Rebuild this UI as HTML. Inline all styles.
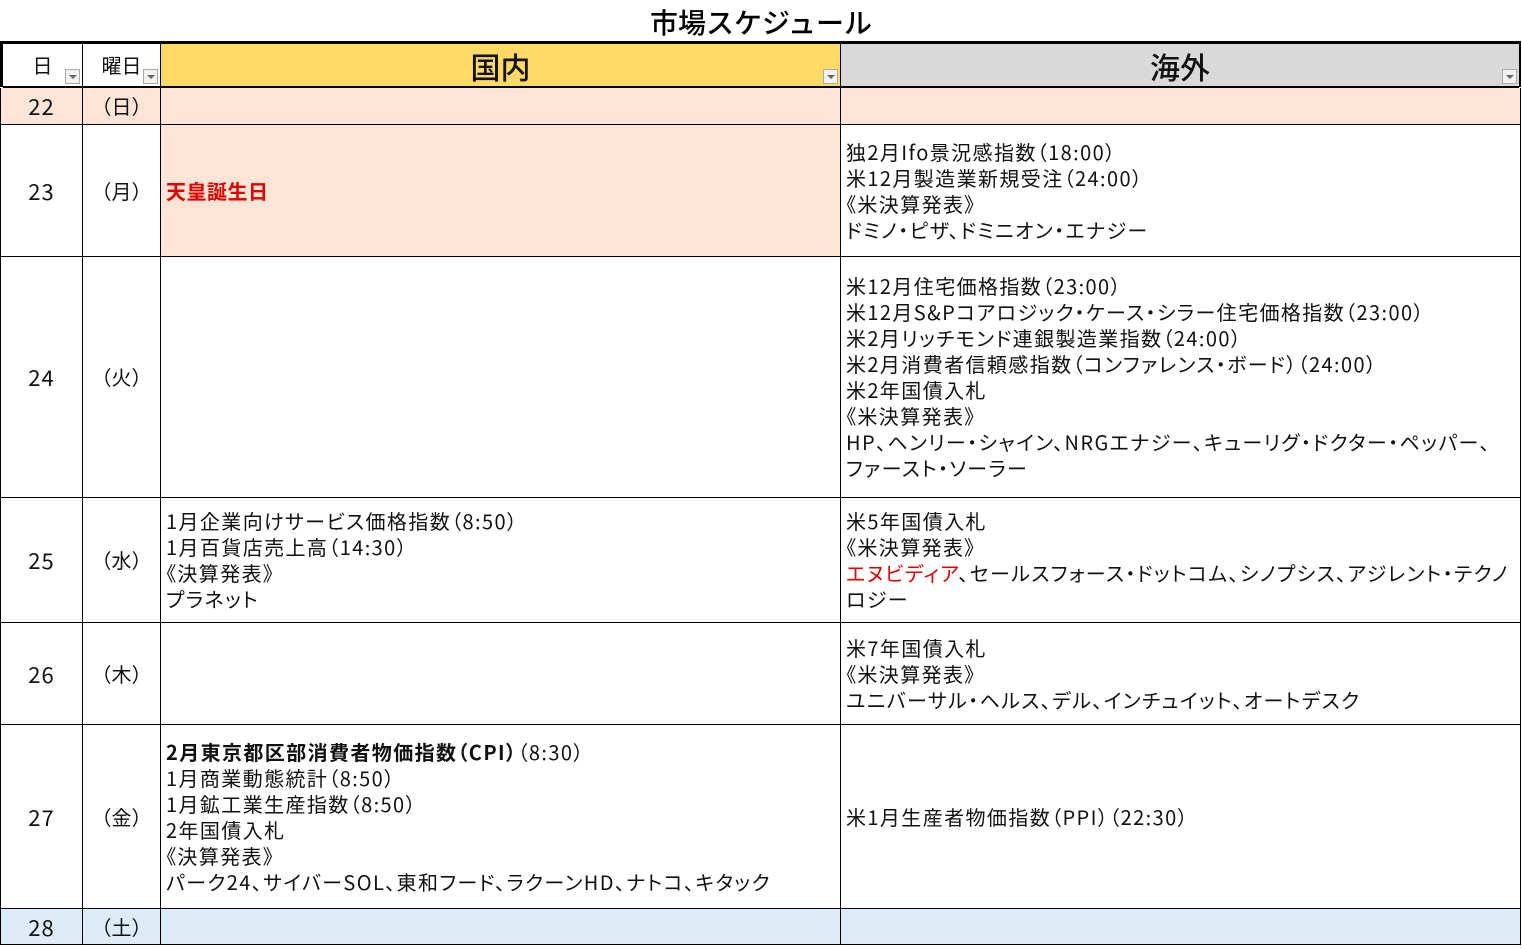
<!DOCTYPE html>
<html><head><meta charset="utf-8"><style>
body{margin:0;width:1522px;height:949px;background:#fff;font-family:"Noto Sans CJK JP",sans-serif;color:#111;position:relative;overflow:hidden}
.t{position:absolute;left:0;right:0;top:2px;text-align:center;font-size:28px;line-height:40px;color:#000;font-weight:500}
.c{position:absolute;box-sizing:border-box;border-right:1px solid #000;border-bottom:1px solid #000;display:flex;align-items:center;font-size:20px;line-height:26px}
.ctr{justify-content:center}
.n{font-size:22px;letter-spacing:1px}
.txt{padding-left:5px;padding-top:0px;white-space:nowrap;font-feature-settings:"palt";letter-spacing:1.4px}
.red{color:#e00000}
.b{font-weight:bold}
.dd{position:absolute;width:15px;height:15px;border:1px solid #aaa;background:#f2f2f2;box-sizing:border-box;bottom:2px;right:2px}
.dd:after{content:"";position:absolute;left:3px;top:5px;border-left:4px solid transparent;border-right:4px solid transparent;border-top:4px solid #666}
.pk{background:#fce4d6}.bl{background:#ddebf7}
.h{font-size:30px;font-weight:500;padding-top:2px}
</style></head><body>
<div class="t">市場スケジュール</div>
<div style="position:absolute;left:0;top:41px;width:1521px;height:3px;background:#000"></div>
<div style="position:absolute;left:0;top:41px;width:3px;height:46px;background:#000"></div>
<div style="position:absolute;left:1519px;top:41px;width:2px;height:46px;background:#000"></div>
<div class="c ctr" style="left:3px;top:44px;width:80px;height:44px;border-bottom:2px solid #000;padding-top:0px">日<span class="dd"></span></div>
<div class="c ctr" style="left:83px;top:44px;width:78px;height:44px;border-bottom:2px solid #000;padding-top:0px">曜日<span class="dd"></span></div>
<div class="c ctr h" style="left:161px;top:44px;width:680px;height:44px;background:#ffd966;border-bottom:2px solid #000">国内<span class="dd"></span></div>
<div class="c ctr h" style="left:841px;top:44px;width:678px;height:44px;background:#d9d9d9;border-bottom:2px solid #000;border-right:none">海外<span class="dd"></span></div>

<div style="position:absolute;left:0;top:88px;width:1px;height:857px;background:#000"></div>
<div style="position:absolute;left:1520px;top:88px;width:1px;height:857px;background:#000"></div>

<div class="c ctr pk n" style="left:1px;top:88px;width:82px;height:37px">22</div>
<div class="c ctr pk" style="left:83px;top:88px;width:78px;height:37px">（日）</div>
<div class="c pk" style="left:161px;top:88px;width:680px;height:37px"></div>
<div class="c pk" style="left:841px;top:88px;width:680px;height:37px"></div>

<div class="c ctr n" style="left:1px;top:125px;width:82px;height:132px">23</div>
<div class="c ctr" style="left:83px;top:125px;width:78px;height:132px">（月）</div>
<div class="c pk" style="left:161px;top:125px;width:680px;height:132px"><div class="txt red b" style="letter-spacing:0.5px">天皇誕生日</div></div>
<div class="c" style="left:841px;top:125px;width:680px;height:132px"><div class="txt">独2月Ifo景況感指数（18:00）<br>米12月製造業新規受注（24:00）<br>《米決算発表》<br>ドミノ・ピザ、ドミニオン・エナジー</div></div>

<div class="c ctr n" style="left:1px;top:257px;width:82px;height:241px">24</div>
<div class="c ctr" style="left:83px;top:257px;width:78px;height:241px">（火）</div>
<div class="c" style="left:161px;top:257px;width:680px;height:241px"></div>
<div class="c" style="left:841px;top:257px;width:680px;height:241px"><div class="txt">米12月住宅価格指数（23:00）<br>米12月S&amp;Pコアロジック・ケース・シラー住宅価格指数（23:00）<br>米2月リッチモンド連銀製造業指数（24:00）<br>米2月消費者信頼感指数（コンファレンス・ボード）（24:00）<br>米2年国債入札<br>《米決算発表》<br>HP、ヘンリー・シャイン、NRGエナジー、キューリグ・ドクター・ペッパー、<br>ファースト・ソーラー</div></div>

<div class="c ctr n" style="left:1px;top:498px;width:82px;height:125px">25</div>
<div class="c ctr" style="left:83px;top:498px;width:78px;height:125px">（水）</div>
<div class="c" style="left:161px;top:498px;width:680px;height:125px"><div class="txt">1月企業向けサービス価格指数（8:50）<br>1月百貨店売上高（14:30）<br>《決算発表》<br>プラネット</div></div>
<div class="c" style="left:841px;top:498px;width:680px;height:125px"><div class="txt">米5年国債入札<br>《米決算発表》<br><span class="red">エヌビディア</span>、セールスフォース・ドットコム、シノプシス、アジレント・テクノ<br>ロジー</div></div>

<div class="c ctr n" style="left:1px;top:623px;width:82px;height:102px">26</div>
<div class="c ctr" style="left:83px;top:623px;width:78px;height:102px">（木）</div>
<div class="c" style="left:161px;top:623px;width:680px;height:102px"></div>
<div class="c" style="left:841px;top:623px;width:680px;height:102px"><div class="txt">米7年国債入札<br>《米決算発表》<br>ユニバーサル・ヘルス、デル、インチュイット、オートデスク</div></div>

<div class="c ctr n" style="left:1px;top:725px;width:82px;height:184px">27</div>
<div class="c ctr" style="left:83px;top:725px;width:78px;height:184px">（金）</div>
<div class="c" style="left:161px;top:725px;width:680px;height:184px"><div class="txt"><span class="b">2月東京都区部消費者物価指数（CPI）</span>（8:30）<br>1月商業動態統計（8:50）<br>1月鉱工業生産指数（8:50）<br>2年国債入札<br>《決算発表》<br>パーク24、サイバーSOL、東和フード、ラクーンHD、ナトコ、キタック</div></div>
<div class="c" style="left:841px;top:725px;width:680px;height:184px"><div class="txt">米1月生産者物価指数（PPI）（22:30）</div></div>

<div class="c ctr bl n" style="left:1px;top:909px;width:82px;height:36px">28</div>
<div class="c ctr bl" style="left:83px;top:909px;width:78px;height:36px">（土）</div>
<div class="c bl" style="left:161px;top:909px;width:680px;height:36px"></div>
<div class="c bl" style="left:841px;top:909px;width:680px;height:36px"></div>
</body></html>
